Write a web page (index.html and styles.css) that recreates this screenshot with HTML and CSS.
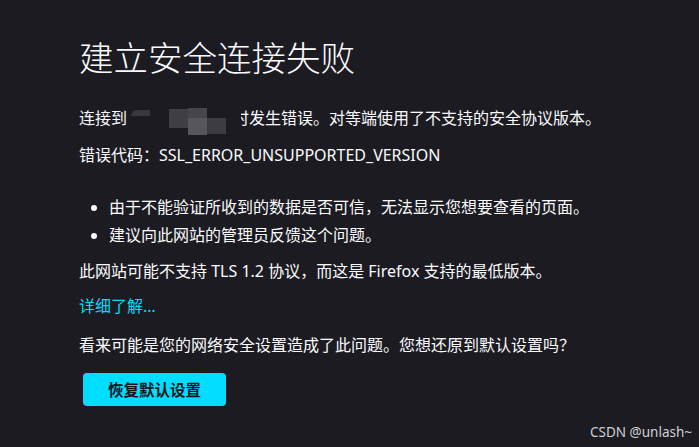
FILE: index.html
```html
<!DOCTYPE html>
<html lang="zh-CN">
<head>
    <meta charset="UTF-8">
    <meta name="viewport" content="width=device-width, initial-scale=1.0">
    <title>建立安全连接失败</title>
    <link rel="stylesheet" href="styles.css">
</head>
<body>
    <div class="container">
        <h1 class="title">建立安全连接失败</h1>

        <p class="intro">连接到<span class="mask"><i class="m1"></i><i class="m2"></i><i class="m3"></i><i class="m4"></i><i class="m5"></i></span>时发生错误。对等端使用了不支持的安全协议版本。</p>
        <p class="code">错误代码：SSL_ERROR_UNSUPPORTED_VERSION</p>

        <ul class="reasons">
            <li>由于不能验证所收到的数据是否可信，无法显示您想要查看的页面。</li>
            <li>建议向此网站的管理员反馈这个问题。</li>
        </ul>

        <p class="note">此网站可能不支持 TLS 1.2 协议，而这是 Firefox 支持的最低版本。</p>
        <a class="more" href="#">详细了解…</a>
        <p class="ask">看来可能是您的网络安全设置造成了此问题。您想还原到默认设置吗？</p>

        <button class="reset">恢复默认设置</button>
    </div>

    <div class="watermark">CSDN @unlash~</div>
</body>
</html>
```

FILE: styles.css
```css
body {
    margin: 0;
    background-color: #1c1b22;
    color: #fbfbfe;
    font-family: "Noto Sans", "Noto Sans CJK SC", sans-serif;
    font-size: 16px;
    line-height: 22px;
    height: 447px;
    overflow: hidden;
}
.container {
    padding: 38px 0 0 79px;
}
.title {
    margin: 0 0 29px;
    font-size: 34.5px;
    line-height: 40px;
    font-weight: 300;
}
.intro {
    margin: 0;
}
.mask {
    display: inline-block;
    position: relative;
    width: 114px;
    height: 22px;
    margin-right: -8px;
    vertical-align: top;
    background-color: #1c1b22;
    filter: blur(0.6px);
}
.mask i {
    position: absolute;
}
.m1 { left: 4px; top: 3px; width: 19px; height: 6px; background: #38373e; border-radius: 6px 0 0 0; }
.m2 { left: 42px; top: 2px; width: 19px; height: 19px; background: #403f46; }
.m3 { left: 61px; top: 1px; width: 19px; height: 10px; background: #47464d; }
.m4 { left: 61px; top: 11px; width: 19px; height: 17px; background: #57565c; }
.m5 { left: 80px; top: 11px; width: 19px; height: 16px; background: #3d3c42; }
.code {
    margin: 15px 0 0;
}
.reasons {
    margin: 30px 0 0;
    padding-left: 30px;
}
.reasons li + li {
    margin-top: 6px;
}
.note {
    margin: 14px 0 0;
}
.more {
    display: block;
    margin-top: 13px;
    color: #00ddff;
    text-decoration: none;
}
.ask {
    margin: 17px 0 0;
}
.reset {
    margin: 17px 0 0 4px;
    width: 143px;
    height: 33px;
    border: none;
    border-radius: 4px;
    background-color: #00ddff;
    color: #15141a;
    font-family: inherit;
    font-size: 15.5px;
    font-weight: 700;
}
.watermark {
    position: absolute;
    right: 7px;
    bottom: 8px;
    font-family: "Noto Sans", sans-serif;
    font-size: 13.5px;
    line-height: 14px;
    color: #d0d0d4;
}
```
